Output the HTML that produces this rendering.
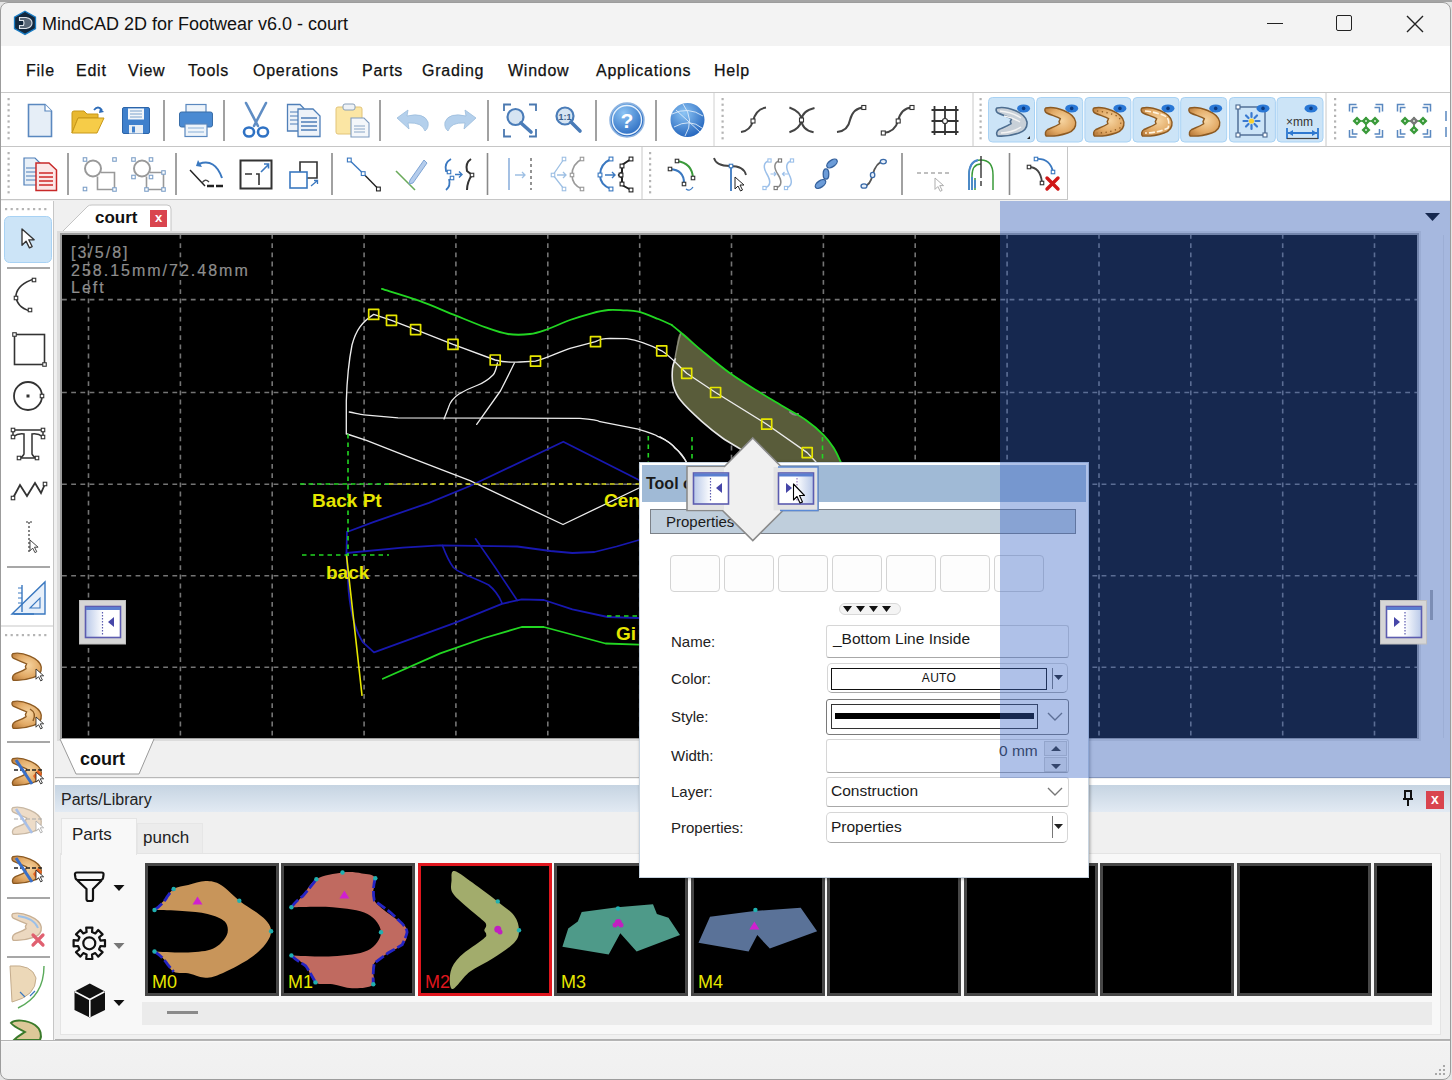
<!DOCTYPE html>
<html><head><meta charset="utf-8">
<style>
*{margin:0;padding:0;box-sizing:border-box}
html,body{width:1452px;height:1080px;overflow:hidden;background:#e4e4e4;font-family:"Liberation Sans",sans-serif;color:#000}
.a{position:absolute}
#menu span{position:absolute;top:62px;font-size:16px;color:#111;letter-spacing:0.75px;-webkit-text-stroke:0.25px #111}
.lbl{position:absolute;font-size:15px;color:#222;left:671px}
.fld{position:absolute;background:#fff;border:1px solid #d6d6d6;border-bottom-color:#a8a8a8;border-radius:3px}
.thumb{position:absolute;top:863px;width:134px;height:133px;background:#000;border:3px solid #474747}
.thumb span{position:absolute;left:4px;top:106px;font-size:18px;color:#e6e600}
.eb{position:absolute;top:555px;width:50px;height:37px;background:#fdfdfd;border:1px solid #d4d4d4;border-radius:4px}
</style></head><body>
<!-- window base -->
<div class="a" style="left:0;top:2px;width:1451px;height:1078px;background:#f0f0f0;border-radius:8px"></div>
<!-- title -->
<div class="a" style="left:0;top:2px;width:1451px;height:44px;background:#f3f3f3;border-radius:8px 8px 0 0"></div>
<svg class="a" style="left:0;top:0" width="50" height="46"><polygon points="25,11.3 35.5,17.2 35.5,28.6 25,34.4 14.5,28.6 14.5,17.2" fill="#13283e" stroke="#1a7cc4" stroke-width="1.3"/><path d="M19.5,17.5 H26 Q32,18.5 32,23 Q32,27.5 26,28.5 H19.5 V25.5 H23.5 Q24.5,23 23.5,20.5 H19.5Z" fill="#5a6878" stroke="#dfe4ea" stroke-width="1.1"/></svg>
<div class="a" style="left:42px;top:14px;font-size:18px;color:#111">MindCAD 2D for Footwear v6.0 - court</div>
<div class="a" style="left:1267px;top:23px;width:16px;height:1px;background:#222"></div>
<div class="a" style="left:1336px;top:15px;width:16px;height:16px;border:1.6px solid #222;border-radius:2px"></div>
<svg class="a" style="left:1406px;top:15px" width="18" height="18"><path d="M1,1 L17,17 M17,1 L1,17" stroke="#222" stroke-width="1.4"/></svg>
<!-- menu -->
<div class="a" style="left:1px;top:46px;width:1449px;height:47px;background:#fff;border-bottom:1px solid #c8c8c8"></div>
<div id="menu">
  <span style="left:26px">File</span>
  <span style="left:76px">Edit</span>
  <span style="left:128px">View</span>
  <span style="left:188px">Tools</span>
  <span style="left:253px">Operations</span>
  <span style="left:362px">Parts</span>
  <span style="left:422px">Grading</span>
  <span style="left:508px">Window</span>
  <span style="left:596px">Applications</span>
  <span style="left:714px">Help</span>
</div>
<!-- toolbar rows -->
<div class="a" style="left:1px;top:93px;width:1449px;height:54px;background:#fff;border-bottom:1px solid #c6c6c6"></div>
<div class="a" style="left:1px;top:147px;width:1449px;height:53px;background:#fff"></div>
<div class="a" style="left:1px;top:199px;width:1067px;height:1px;background:#c6c6c6"></div>
<div class="a" style="left:1067px;top:147px;width:1px;height:53px;background:#c6c6c6"></div>
<div id="icons1"><svg class="a" style="left:0;top:0" width="1452" height="1080"><defs><radialGradient id="shg" cx="0.55" cy="0.45" r="0.7"><stop offset="0" stop-color="#f6d4a0"/><stop offset="0.6" stop-color="#e2aa66"/><stop offset="1" stop-color="#b87a3a"/></radialGradient></defs><rect x="7.5" y="98" width="2.2" height="2.2" fill="#b4b4b4"/><rect x="7.5" y="103.6" width="2.2" height="2.2" fill="#b4b4b4"/><rect x="7.5" y="109.19999999999999" width="2.2" height="2.2" fill="#b4b4b4"/><rect x="7.5" y="114.79999999999998" width="2.2" height="2.2" fill="#b4b4b4"/><rect x="7.5" y="120.39999999999998" width="2.2" height="2.2" fill="#b4b4b4"/><rect x="7.5" y="125.99999999999997" width="2.2" height="2.2" fill="#b4b4b4"/><rect x="7.5" y="131.59999999999997" width="2.2" height="2.2" fill="#b4b4b4"/><rect x="7.5" y="137.19999999999996" width="2.2" height="2.2" fill="#b4b4b4"/><path d="M28.5,104.5 H45 L51.5,111 V136.5 H28.5Z" fill="#e6eef7" stroke="#5a88bf" stroke-width="1.6"/><path d="M45,104.5V111H51.5" fill="#fff" stroke="#5a88bf" stroke-width="1.2"/><path d="M72,133 V113 Q72,111 74,111 H84 L87,114 H98 V118 H78 Z" fill="#e8b830" stroke="#c89818" stroke-width="1"/><path d="M72,133 L78,118 H104 L97,133Z" fill="#f6cc48" stroke="#c89818" stroke-width="1"/><path d="M94,110 Q98,105 102,110" stroke="#2e6cb8" stroke-width="1.8" fill="none"/><path d="M100,108 L104,112 L99,113Z" fill="#2e6cb8"/><rect x="122.5" y="107.5" width="27" height="26" rx="1.5" fill="#3f80cc" stroke="#2c64a8" stroke-width="1"/><rect x="128" y="108.5" width="16" height="11" fill="#f2f6fa"/><path d="M130,111H142M130,114H142M130,117H142" stroke="#7aa2cc" stroke-width="1"/><rect x="129" y="125" width="14" height="8.5" fill="#e8eef4"/><rect x="132" y="126.5" width="3" height="6" fill="#3f80cc"/><path d="M164,100V141" stroke="#8a8a8a" stroke-width="1.6"/><rect x="186" y="104.5" width="20" height="8" fill="#eef4fa" stroke="#5a88bf" stroke-width="1.2"/><rect x="179.5" y="112" width="33" height="15" rx="2" fill="#4a8ad2" stroke="#3a6ea8" stroke-width="1"/><rect x="185" y="124" width="22" height="12.5" fill="#eef4fa" stroke="#5a88bf" stroke-width="1.2"/><path d="M188,128H204M188,132H204" stroke="#8ab0d8" stroke-width="1"/><path d="M224,100V141" stroke="#8a8a8a" stroke-width="1.6"/><path d="M246,103 L258,126 M266,103 L254,126" stroke="#5f8dc4" stroke-width="2.6" stroke-linecap="round"/><ellipse cx="249" cy="132" rx="5" ry="4.5" fill="none" stroke="#2f72c4" stroke-width="2.6"/><ellipse cx="263" cy="132" rx="5" ry="4.5" fill="none" stroke="#2f72c4" stroke-width="2.6"/><path d="M287.5,104.5H300L304,108.5V131H287.5Z" fill="#eef3f9" stroke="#4f7fb8" stroke-width="1.3"/><path d="M290,112H301M290,116H301M290,120H301M290,124H301" stroke="#4f7fb8" stroke-width="1.2"/><path d="M298,109H313L320,116V136.5H298Z" fill="#eef3f9" stroke="#4f7fb8" stroke-width="1.3"/><path d="M301,118H317M301,122H317M301,126H317M301,130H317" stroke="#4f7fb8" stroke-width="1.3"/><rect x="336" y="107" width="26" height="27" rx="2" fill="#fbe6a4" stroke="#e2c478" stroke-width="1"/><rect x="343" y="104" width="12" height="6" rx="2" fill="#eef2f6" stroke="#8aa0b8" stroke-width="1"/><path d="M351,118H364L369,123V137H351Z" fill="#f4f7fa" stroke="#7f9cbf" stroke-width="1.1"/><path d="M354,126H365M354,129H365M354,132H365" stroke="#8aa6c6" stroke-width="1"/><path d="M380,100V141" stroke="#8a8a8a" stroke-width="1.6"/><path d="M397,118 L408,110 L407,116 Q424,112 428,122 Q429,128 425,131 Q422,122 408,123 L409,129Z" fill="#b4d0ec" stroke="#9cbcdc" stroke-width="0.8"/><path d="M476,118 L465,110 L466,116 Q449,112 445,122 Q444,128 448,131 Q451,122 465,123 L464,129Z" fill="#b4d0ec" stroke="#9cbcdc" stroke-width="0.8"/><path d="M488,100V141" stroke="#8a8a8a" stroke-width="1.6"/><path d="M504,111V104.5H511 M529,104.5H536V111 M536,129V136.5H529 M511,136.5H504V129" stroke="#4a78b0" stroke-width="1.8" fill="none"/><circle cx="515.5" cy="117" r="8" fill="#d6e4f2" stroke="#4a7cb8" stroke-width="2.2"/><path d="M521,123L531,132" stroke="#4a7cb8" stroke-width="3.6" stroke-linecap="round"/><circle cx="565" cy="116" r="8.5" fill="#d6e4f2" stroke="#4a7cb8" stroke-width="2.2"/><text x="565" y="119.5" font-size="9" font-weight="bold" text-anchor="middle" fill="#3a5c88" font-family="Liberation Sans">1:1</text><path d="M571,122L580,131" stroke="#4a7cb8" stroke-width="3.6" stroke-linecap="round"/><path d="M596,100V141" stroke="#8a8a8a" stroke-width="1.6"/><defs><radialGradient id="hg" cx="0.4" cy="0.3" r="0.8"><stop offset="0" stop-color="#8cc4f4"/><stop offset="1" stop-color="#1a5cb8"/></radialGradient></defs><circle cx="627" cy="120" r="17" fill="url(#hg)" stroke="#8fb4e0" stroke-width="1.5"/><circle cx="627" cy="120" r="14.5" fill="none" stroke="#e8f2fc" stroke-width="1.3"/><text x="627" y="128" font-size="21" font-weight="bold" text-anchor="middle" fill="#fff" font-family="Liberation Sans">?</text><path d="M656,100V141" stroke="#8a8a8a" stroke-width="1.6"/><circle cx="687.5" cy="120" r="17" fill="url(#hg)"/><path d="M672,114 Q688,106 703,116 M674,127 Q690,118 702,128 M683,104 Q695,120 685,136 M676,110 L700,132" stroke="#e4f0fc" stroke-width="1" fill="none" opacity="0.85"/><path d="M714,93V146" stroke="#d0d0d0" stroke-width="1"/><rect x="721.5" y="98" width="2.2" height="2.2" fill="#b4b4b4"/><rect x="721.5" y="103.6" width="2.2" height="2.2" fill="#b4b4b4"/><rect x="721.5" y="109.19999999999999" width="2.2" height="2.2" fill="#b4b4b4"/><rect x="721.5" y="114.79999999999998" width="2.2" height="2.2" fill="#b4b4b4"/><rect x="721.5" y="120.39999999999998" width="2.2" height="2.2" fill="#b4b4b4"/><rect x="721.5" y="125.99999999999997" width="2.2" height="2.2" fill="#b4b4b4"/><rect x="721.5" y="131.59999999999997" width="2.2" height="2.2" fill="#b4b4b4"/><rect x="721.5" y="137.19999999999996" width="2.2" height="2.2" fill="#b4b4b4"/><path d="M741,132 Q750,131 753,121 Q756,109 766,107.5" stroke="#444" stroke-width="2" fill="none"/><rect x="751.0" y="119.0" width="4" height="4" fill="#fff" stroke="#333" stroke-width="1.1"/><path d="M789.4,107.5 Q801.5,112 801.5,120 Q802,130 813.6,132.3 M814.5,108 Q802,111 801.5,120 Q800,129 789.4,132.3" stroke="#444" stroke-width="2" fill="none"/><rect x="799.5" y="118.0" width="4" height="4" fill="#fff" stroke="#333" stroke-width="1.1"/><path d="M837,132 Q848,131 850,120 Q853,108 863.8,107.5" stroke="#444" stroke-width="2" fill="none"/><rect x="861.8" y="105.5" width="4" height="4" fill="#fff" stroke="#333" stroke-width="1.1"/><path d="M883.3,133 Q895,132 898,121 Q901,108 912,107.5" stroke="#444" stroke-width="2" fill="none"/><rect x="881.3" y="131.0" width="4" height="4" fill="#fff" stroke="#333" stroke-width="1.1"/><rect x="896.2" y="119.0" width="4" height="4" fill="#fff" stroke="#333" stroke-width="1.1"/><rect x="910.0" y="105.5" width="4" height="4" fill="#fff" stroke="#333" stroke-width="1.1"/><path d="M934.5,106V135M945,106V135M956,106V135M931.5,110H958.5M931.5,121H958.5M931.5,132H958.5" stroke="#333" stroke-width="1.8"/><circle cx="945" cy="121" r="2.5" fill="#fff" stroke="#333" stroke-width="1.2"/><path d="M973,93V146" stroke="#c8c8c8" stroke-width="1"/><rect x="979.5" y="98" width="2.2" height="2.2" fill="#b4b4b4"/><rect x="979.5" y="103.6" width="2.2" height="2.2" fill="#b4b4b4"/><rect x="979.5" y="109.19999999999999" width="2.2" height="2.2" fill="#b4b4b4"/><rect x="979.5" y="114.79999999999998" width="2.2" height="2.2" fill="#b4b4b4"/><rect x="979.5" y="120.39999999999998" width="2.2" height="2.2" fill="#b4b4b4"/><rect x="979.5" y="125.99999999999997" width="2.2" height="2.2" fill="#b4b4b4"/><rect x="979.5" y="131.59999999999997" width="2.2" height="2.2" fill="#b4b4b4"/><rect x="979.5" y="137.19999999999996" width="2.2" height="2.2" fill="#b4b4b4"/><rect x="988.5" y="97.5" width="46" height="44.5" rx="4" fill="#cce4f7" stroke="#a8d2f4" stroke-width="1"/><rect x="1036.7" y="97.5" width="46" height="44.5" rx="4" fill="#cce4f7" stroke="#a8d2f4" stroke-width="1"/><rect x="1084.9" y="97.5" width="46" height="44.5" rx="4" fill="#cce4f7" stroke="#a8d2f4" stroke-width="1"/><rect x="1133" y="97.5" width="46" height="44.5" rx="4" fill="#cce4f7" stroke="#a8d2f4" stroke-width="1"/><rect x="1180.7" y="97.5" width="46" height="44.5" rx="4" fill="#cce4f7" stroke="#a8d2f4" stroke-width="1"/><rect x="1229.4" y="97.5" width="46" height="44.5" rx="4" fill="#cce4f7" stroke="#a8d2f4" stroke-width="1"/><rect x="1277" y="97.5" width="46" height="44.5" rx="4" fill="#cce4f7" stroke="#a8d2f4" stroke-width="1"/><g transform="translate(1012,122)"><path d="M-15,-14 C-11,-15 -3,-14 3,-11.5 C9,-9 14,-6 15,0 C15.5,5 13,9 7,11 C1,13 -9,14.5 -14.5,14 C-16,12 -15.5,9 -13,7.5 C-10,6 -5,4.5 -1,1.7 L-1.7,-0.4 L-0.4,-3.3 C-3,-5 -10,-7 -14,-9 C-16,-10 -16.5,-13 -15,-14Z" fill="#c8d0d8" stroke="#4e6e90" stroke-width="1.6"/><path d="M-12,-11 Q0,-10 9,-4 M-11,11 Q2,10 9,5 M-8,-6 Q2,-4 8,0" stroke="#f4f4f4" stroke-width="1.5" fill="none"/></g><ellipse cx="1023.6" cy="108.4" rx="6.5" ry="4" fill="#2a78d6"/><circle cx="1023.6" cy="108.4" r="1.8" fill="#0c3a80"/><path d="M1027,139 L1030,136 L1030,139Z" fill="#222"/><g transform="translate(1060.7,122)"><path d="M-15,-14 C-11,-15 -3,-14 3,-11.5 C9,-9 14,-6 15,0 C15.5,5 13,9 7,11 C1,13 -9,14.5 -14.5,14 C-16,12 -15.5,9 -13,7.5 C-10,6 -5,4.5 -1,1.7 L-1.7,-0.4 L-0.4,-3.3 C-3,-5 -10,-7 -14,-9 C-16,-10 -16.5,-13 -15,-14Z" fill="url(#shg)" stroke="#8c5a22" stroke-width="1.4" opacity="1"/></g><ellipse cx="1071.7" cy="108.4" rx="6.5" ry="4" fill="#2a78d6"/><circle cx="1071.7" cy="108.4" r="1.8" fill="#0c3a80"/><g transform="translate(1108.9,122)"><path d="M-15,-14 C-11,-15 -3,-14 3,-11.5 C9,-9 14,-6 15,0 C15.5,5 13,9 7,11 C1,13 -9,14.5 -14.5,14 C-16,12 -15.5,9 -13,7.5 C-10,6 -5,4.5 -1,1.7 L-1.7,-0.4 L-0.4,-3.3 C-3,-5 -10,-7 -14,-9 C-16,-10 -16.5,-13 -15,-14Z" fill="url(#shg)" stroke="#8c5a22" stroke-width="1.4" opacity="1"/></g><ellipse cx="1119.9" cy="108.4" rx="6.5" ry="4" fill="#2a78d6"/><circle cx="1119.9" cy="108.4" r="1.8" fill="#0c3a80"/><g transform="translate(1157,122)"><path d="M-15,-14 C-11,-15 -3,-14 3,-11.5 C9,-9 14,-6 15,0 C15.5,5 13,9 7,11 C1,13 -9,14.5 -14.5,14 C-16,12 -15.5,9 -13,7.5 C-10,6 -5,4.5 -1,1.7 L-1.7,-0.4 L-0.4,-3.3 C-3,-5 -10,-7 -14,-9 C-16,-10 -16.5,-13 -15,-14Z" fill="url(#shg)" stroke="#8c5a22" stroke-width="1.4" opacity="1"/></g><ellipse cx="1168" cy="108.4" rx="6.5" ry="4" fill="#2a78d6"/><circle cx="1168" cy="108.4" r="1.8" fill="#0c3a80"/><g transform="translate(1204.7,122)"><path d="M-15,-14 C-11,-15 -3,-14 3,-11.5 C9,-9 14,-6 15,0 C15.5,5 13,9 7,11 C1,13 -9,14.5 -14.5,14 C-16,12 -15.5,9 -13,7.5 C-10,6 -5,4.5 -1,1.7 L-1.7,-0.4 L-0.4,-3.3 C-3,-5 -10,-7 -14,-9 C-16,-10 -16.5,-13 -15,-14Z" fill="url(#shg)" stroke="#8c5a22" stroke-width="1.4" opacity="1"/></g><ellipse cx="1215.7" cy="108.4" rx="6.5" ry="4" fill="#2a78d6"/><circle cx="1215.7" cy="108.4" r="1.8" fill="#0c3a80"/><g transform="translate(1108.9,122)"><path d="M-12,-11 Q0,-10 10,-5 Q13,0 11,6 Q0,11 -12,11" stroke="#8c5a22" stroke-width="1.3" stroke-dasharray="1.3 3.5" fill="none"/></g><g transform="translate(1157,122)"><path d="M-12,-11 Q0,-10 10,-5 Q13,0 11,6 Q0,11 -12,11" stroke="#fff4e0" stroke-width="1.6" stroke-dasharray="6 2" fill="none"/></g><rect x="1238" y="107" width="27" height="28" fill="none" stroke="#4a6890" stroke-width="1.4"/><rect x="1236.0" y="105.0" width="4" height="4" fill="#fff" stroke="#4a6890" stroke-width="1.1"/><rect x="1263.0" y="133.0" width="4" height="4" fill="#fff" stroke="#4a6890" stroke-width="1.1"/><rect x="1236.0" y="133.0" width="4" height="4" fill="#fff" stroke="#4a6890" stroke-width="1.1"/><g stroke="#3a7ad0" stroke-width="2.2" stroke-linecap="round"><path d="M1251.5,113V117M1251.5,125V129M1243.5,121H1247.5M1255.5,121H1259.5M1246,115.5L1248.5,118M1254.5,124L1257,126.5M1257,115.5L1254.5,118M1248.5,124L1246,126.5"/></g><circle cx="1251.5" cy="121" r="2.6" fill="#f8d030"/><ellipse cx="1263" cy="108.4" rx="6.5" ry="4" fill="#2a78d6"/><circle cx="1263" cy="108.4" r="1.8" fill="#0c3a80"/><text x="1286" y="126" font-size="12" fill="#333" font-family="Liberation Sans">×mm</text><path d="M1287,128V139M1318,128V139M1288,133H1317" stroke="#2e78d0" stroke-width="1.8"/><path d="M1288,133L1293,130V136Z M1317,133L1312,130V136Z" fill="#2e78d0"/><path d="M1287,138.5H1318" stroke="#444" stroke-width="1.2"/><ellipse cx="1311" cy="108.4" rx="6.5" ry="4" fill="#2a78d6"/><circle cx="1311" cy="108.4" r="1.8" fill="#0c3a80"/><path d="M1326,93V146" stroke="#c8c8c8" stroke-width="1"/><rect x="1334" y="98" width="2.2" height="2.2" fill="#b4b4b4"/><rect x="1334" y="103.6" width="2.2" height="2.2" fill="#b4b4b4"/><rect x="1334" y="109.19999999999999" width="2.2" height="2.2" fill="#b4b4b4"/><rect x="1334" y="114.79999999999998" width="2.2" height="2.2" fill="#b4b4b4"/><rect x="1334" y="120.39999999999998" width="2.2" height="2.2" fill="#b4b4b4"/><rect x="1334" y="125.99999999999997" width="2.2" height="2.2" fill="#b4b4b4"/><rect x="1334" y="131.59999999999997" width="2.2" height="2.2" fill="#b4b4b4"/><rect x="1334" y="137.19999999999996" width="2.2" height="2.2" fill="#b4b4b4"/><path d="M1349.5,111.5V104.5H1356.5 M1352.5,112.5V107.5H1357.5 M1375.5,104.5H1382.5V111.5 M1374.5,107.5H1379.5V112.5 M1349.5,130V137H1356.5 M1352.5,129V134H1357.5 M1375.5,137H1382.5V130 M1374.5,134H1379.5V129" stroke="#5a88c0" stroke-width="1.5" fill="none"/><path d="M1357,121H1375M1366,117V129" stroke="#3a9a3a" stroke-width="1.6"/><path d="M1352.5,121L1357,116.5L1361.5,121L1357,125.5Z" fill="#3a9a3a"/><circle cx="1357" cy="121" r="0.9" fill="#e8f4e8"/><path d="M1370.5,121L1375,116.5L1379.5,121L1375,125.5Z" fill="#3a9a3a"/><circle cx="1375" cy="121" r="0.9" fill="#e8f4e8"/><path d="M1361.5,121L1366,116.5L1370.5,121L1366,125.5Z" fill="#3a9a3a"/><circle cx="1366" cy="121" r="0.9" fill="#e8f4e8"/><path d="M1361.5,130L1366,125.5L1370.5,130L1366,134.5Z" fill="#3a9a3a"/><circle cx="1366" cy="130" r="0.9" fill="#e8f4e8"/><path d="M1397.5,111.5V104.5H1404.5 M1400.5,112.5V107.5H1405.5 M1423.5,104.5H1430.5V111.5 M1422.5,107.5H1427.5V112.5 M1397.5,130V137H1404.5 M1400.5,129V134H1405.5 M1423.5,137H1430.5V130 M1422.5,134H1427.5V129" stroke="#5a88c0" stroke-width="1.5" fill="none"/><path d="M1405,121H1423M1414,117V129" stroke="#3a9a3a" stroke-width="1.6"/><path d="M1400.5,121L1405,116.5L1409.5,121L1405,125.5Z" fill="#3a9a3a"/><circle cx="1405" cy="121" r="0.9" fill="#e8f4e8"/><path d="M1418.5,121L1423,116.5L1427.5,121L1423,125.5Z" fill="#3a9a3a"/><circle cx="1423" cy="121" r="0.9" fill="#e8f4e8"/><path d="M1409.5,121L1414,116.5L1418.5,121L1414,125.5Z" fill="#777"/><circle cx="1414" cy="121" r="0.9" fill="#e8f4e8"/><path d="M1409.5,130L1414,125.5L1418.5,130L1414,134.5Z" fill="#3a9a3a"/><circle cx="1414" cy="130" r="0.9" fill="#e8f4e8"/><path d="M1446,111V121M1446,127V137" stroke="#5a88c0" stroke-width="1.5"/><rect x="7.5" y="152" width="2.2" height="2.2" fill="#b4b4b4"/><rect x="7.5" y="157.6" width="2.2" height="2.2" fill="#b4b4b4"/><rect x="7.5" y="163.2" width="2.2" height="2.2" fill="#b4b4b4"/><rect x="7.5" y="168.79999999999998" width="2.2" height="2.2" fill="#b4b4b4"/><rect x="7.5" y="174.39999999999998" width="2.2" height="2.2" fill="#b4b4b4"/><rect x="7.5" y="179.99999999999997" width="2.2" height="2.2" fill="#b4b4b4"/><rect x="7.5" y="185.59999999999997" width="2.2" height="2.2" fill="#b4b4b4"/><rect x="7.5" y="191.19999999999996" width="2.2" height="2.2" fill="#b4b4b4"/><path d="M24,158H35L40,163V185H24Z" fill="#e8f0f8" stroke="#4f7fb8" stroke-width="1.2"/><path d="M26,168H36M26,172H36M26,176H36M26,180H36" stroke="#4f7fb8" stroke-width="1.2"/><path d="M36,163H49L56.5,170V190.5H36Z" fill="#fbe8e8" stroke="#c82828" stroke-width="1.5"/><path d="M39,173H53M39,177H53M39,181H53M39,185H53" stroke="#d02828" stroke-width="1.5"/><path d="M68,153V195" stroke="#8a8a8a" stroke-width="1.6"/><circle cx="93" cy="168.5" r="8" fill="none" stroke="#999" stroke-width="2"/><path d="M97.5,176.5V189.5H114.5V172.5H101" stroke="#999" stroke-width="1.6" fill="none"/><rect x="83.25" y="157.75" width="3.5" height="3.5" fill="#fff" stroke="#7ea0c8" stroke-width="1.1"/><rect x="112.75" y="157.75" width="3.5" height="3.5" fill="#fff" stroke="#7ea0c8" stroke-width="1.1"/><rect x="83.25" y="187.25" width="3.5" height="3.5" fill="#fff" stroke="#7ea0c8" stroke-width="1.1"/><rect x="112.75" y="187.75" width="3.5" height="3.5" fill="#fff" stroke="#7ea0c8" stroke-width="1.1"/><circle cx="142" cy="168.5" r="8" fill="none" stroke="#999" stroke-width="2"/><path d="M146.5,176.5V189.5H163.5V172.5H150" stroke="#999" stroke-width="1.6" fill="none"/><rect x="131.75" y="157.75" width="3.5" height="3.5" fill="#fff" stroke="#7ea0c8" stroke-width="1.1"/><rect x="149.25" y="157.75" width="3.5" height="3.5" fill="#fff" stroke="#7ea0c8" stroke-width="1.1"/><rect x="131.75" y="175.25" width="3.5" height="3.5" fill="#fff" stroke="#7ea0c8" stroke-width="1.1"/><rect x="149.25" y="175.25" width="3.5" height="3.5" fill="#fff" stroke="#7ea0c8" stroke-width="1.1"/><rect x="144.75" y="187.75" width="3.5" height="3.5" fill="#fff" stroke="#7ea0c8" stroke-width="1.1"/><rect x="161.75" y="187.75" width="3.5" height="3.5" fill="#fff" stroke="#7ea0c8" stroke-width="1.1"/><rect x="161.75" y="170.75" width="3.5" height="3.5" fill="#fff" stroke="#7ea0c8" stroke-width="1.1"/><path d="M176,153V195" stroke="#8a8a8a" stroke-width="1.6"/><path d="M190,170L205,186" stroke="#222" stroke-width="1.4"/><path d="M199,164 Q215,158 222,178" stroke="#3a78c0" stroke-width="2" fill="none"/><path d="M198,160L196,166L202,167Z" fill="#3a78c0"/><path d="M202,183 Q205,178 209,182" stroke="#444" stroke-width="1.3" fill="none"/><path d="M207,186H224" stroke="#222" stroke-width="2.4" stroke-dasharray="7 2"/><rect x="240.5" y="160.5" width="31" height="28" fill="none" stroke="#333" stroke-width="2"/><path d="M245,174H252M256,174H259V185M259,174" stroke="#333" stroke-width="1.6" fill="none"/><path d="M261,172L268,165M264,164H268.5V168.5" stroke="#3a78c0" stroke-width="1.6" fill="none"/><path d="M300,172V162H317V178H307" stroke="#333" stroke-width="1.6" fill="none"/><rect x="290" y="172" width="17" height="16" fill="#fff" stroke="#3a78c0" stroke-width="1.6"/><path d="M311,186L317,181M314,180.5H317.5V184" stroke="#3a78c0" stroke-width="1.3" fill="none"/><path d="M332,153V195" stroke="#8a8a8a" stroke-width="1.6"/><path d="M349.3,160L363.2,173.6" stroke="#3a78c0" stroke-width="1.4"/><path d="M363.2,173.6L378.4,189" stroke="#222" stroke-width="1.4"/><rect x="347.40000000000003" y="158.1" width="3.8" height="3.8" fill="#fff" stroke="#3a78c0" stroke-width="1.1"/><rect x="361.3" y="171.7" width="3.8" height="3.8" fill="#fff" stroke="#3a78c0" stroke-width="1.1"/><rect x="376.5" y="187.1" width="3.8" height="3.8" fill="#fff" stroke="#222" stroke-width="1.1"/><path d="M396,171L415,190" stroke="#6aaa5a" stroke-width="1.6"/><path d="M424,160 L427,163 L413,183 L409,184 L410,180Z" fill="#b4ccec" stroke="#7ea4d4" stroke-width="1"/><path d="M451,159 Q444,163 446,171 L449,172 M449,179 Q451,186 446,190" stroke="#3a78c0" stroke-width="1.8" fill="none"/><rect x="447.25" y="170.25" width="3.5" height="3.5" fill="#fff" stroke="#3a78c0" stroke-width="1.1"/><rect x="450.25" y="176.25" width="3.5" height="3.5" fill="#fff" stroke="#3a78c0" stroke-width="1.1"/><path d="M455,174.5H462M459,171.5L462,174.5L459,177.5" stroke="#3a78c0" stroke-width="1.4" fill="none"/><path d="M471,159 Q465,163 467,171 L472,175 Q467,182 467,190" stroke="#333" stroke-width="2" fill="none"/><rect x="470.25" y="173.25" width="3.5" height="3.5" fill="#fff" stroke="#333" stroke-width="1.1"/><path d="M487.5,153V195" stroke="#8a8a8a" stroke-width="1.6"/><path d="M509,158V190" stroke="#7ea6d8" stroke-width="1.4"/><path d="M531,158V190" stroke="#666" stroke-width="1.4" stroke-dasharray="3 3"/><path d="M515,175H525M522,172L525,175L522,178" stroke="#9ec0e4" stroke-width="1.3" fill="none"/><path d="M564,159 L553,175 L564,189" stroke="#9ec0e4" stroke-width="1.3" fill="none"/><rect x="562.25" y="157.25" width="3.5" height="3.5" fill="#fff" stroke="#9ec0e4" stroke-width="1.1"/><rect x="551.25" y="173.25" width="3.5" height="3.5" fill="#fff" stroke="#9ec0e4" stroke-width="1.1"/><rect x="562.25" y="187.25" width="3.5" height="3.5" fill="#fff" stroke="#9ec0e4" stroke-width="1.1"/><path d="M557,175H566M563,172L566,175L563,178" stroke="#9ec0e4" stroke-width="1.3" fill="none"/><path d="M582,159 Q572,164 572,175 Q572,185 582,189" stroke="#9a9a9a" stroke-width="1.6" fill="none"/><rect x="580.25" y="157.25" width="3.5" height="3.5" fill="#fff" stroke="#999" stroke-width="1.1"/><rect x="570.25" y="173.25" width="3.5" height="3.5" fill="#fff" stroke="#999" stroke-width="1.1"/><rect x="580.25" y="187.25" width="3.5" height="3.5" fill="#fff" stroke="#999" stroke-width="1.1"/><path d="M611,159 Q600,164 600,175 Q600,185 611,189" stroke="#3a78c0" stroke-width="2" fill="none"/><rect x="609.1" y="157.1" width="3.8" height="3.8" fill="#fff" stroke="#3a78c0" stroke-width="1.1"/><rect x="598.1" y="173.1" width="3.8" height="3.8" fill="#fff" stroke="#3a78c0" stroke-width="1.1"/><rect x="609.1" y="187.1" width="3.8" height="3.8" fill="#fff" stroke="#3a78c0" stroke-width="1.1"/><path d="M605,175H615M612,172L615,175L612,178" stroke="#3a78c0" stroke-width="1.4" fill="none"/><path d="M631,159 L622,165 V172 L619,175 L622,178 V185 L631,190" stroke="#222" stroke-width="2" fill="none"/><rect x="629.1" y="157.1" width="3.8" height="3.8" fill="#fff" stroke="#222" stroke-width="1.1"/><rect x="620.1" y="164.1" width="3.8" height="3.8" fill="#fff" stroke="#222" stroke-width="1.1"/><rect x="619.1" y="173.1" width="3.8" height="3.8" fill="#fff" stroke="#222" stroke-width="1.1"/><rect x="620.1" y="182.1" width="3.8" height="3.8" fill="#fff" stroke="#222" stroke-width="1.1"/><rect x="629.1" y="188.1" width="3.8" height="3.8" fill="#fff" stroke="#222" stroke-width="1.1"/><path d="M642,147V199" stroke="#c8c8c8" stroke-width="1"/><rect x="649" y="152" width="2.2" height="2.2" fill="#b4b4b4"/><rect x="649" y="157.6" width="2.2" height="2.2" fill="#b4b4b4"/><rect x="649" y="163.2" width="2.2" height="2.2" fill="#b4b4b4"/><rect x="649" y="168.79999999999998" width="2.2" height="2.2" fill="#b4b4b4"/><rect x="649" y="174.39999999999998" width="2.2" height="2.2" fill="#b4b4b4"/><rect x="649" y="179.99999999999997" width="2.2" height="2.2" fill="#b4b4b4"/><rect x="649" y="185.59999999999997" width="2.2" height="2.2" fill="#b4b4b4"/><rect x="649" y="191.19999999999996" width="2.2" height="2.2" fill="#b4b4b4"/><path d="M677,161 Q692,163 693,178" stroke="#3a9a3a" stroke-width="2" fill="none"/><path d="M670,169 Q684,170 684,183" stroke="#3a78c0" stroke-width="2" fill="none"/><rect x="675.25" y="159.25" width="3.5" height="3.5" fill="#fff" stroke="#333" stroke-width="1.1"/><rect x="691.25" y="176.25" width="3.5" height="3.5" fill="#fff" stroke="#333" stroke-width="1.1"/><rect x="668.25" y="167.25" width="3.5" height="3.5" fill="#fff" stroke="#333" stroke-width="1.1"/><rect x="682.25" y="182.25" width="3.5" height="3.5" fill="#fff" stroke="#333" stroke-width="1.1"/><path d="M686,189 Q690,192 693,187" stroke="#3a78c0" stroke-width="1.2" fill="none"/><path d="M714,158 Q716,166 730,166 Q744,166 746,175" stroke="#444" stroke-width="1.8" fill="none"/><path d="M731,166V191" stroke="#3a78c0" stroke-width="1.8"/><rect x="729.25" y="164.25" width="3.5" height="3.5" fill="#fff" stroke="#3a78c0" stroke-width="1.1"/><path transform="translate(735,177) scale(1)" d="M0,0 L0,12 L3,9 L5.5,14 L7.5,13 L5,8 L9,8Z" fill="#fff" stroke="#222" stroke-width="1" stroke-linejoin="round"/><path d="M769.5,160.5 C762.5,162.5 763.5,168.25 767.0,174.25 C770.5,180.25 771.5,186 764.5,188" stroke="#9cc0ea" stroke-width="1.5" fill="none"/><rect x="767.9" y="158.9" width="3.2" height="3.2" fill="#fff" stroke="#9cc0ea" stroke-width="1.1"/><rect x="762.9" y="186.4" width="3.2" height="3.2" fill="#fff" stroke="#9cc0ea" stroke-width="1.1"/><path d="M780,160.5 C773,162.5 774,168.25 777.85,174.25 C781.7,180.25 782.7,186 775.7,188" stroke="#8a8a8a" stroke-width="1.5" fill="none"/><rect x="778.4" y="158.9" width="3.2" height="3.2" fill="#fff" stroke="#777" stroke-width="1.1"/><rect x="774.1" y="186.4" width="3.2" height="3.2" fill="#fff" stroke="#777" stroke-width="1.1"/><path d="M792,160.5 C785,162.5 786,168.25 789.0,174.25 C792,180.25 793,186 786,188" stroke="#9cc0ea" stroke-width="1.5" fill="none"/><rect x="790.4" y="158.9" width="3.2" height="3.2" fill="#fff" stroke="#9cc0ea" stroke-width="1.1"/><rect x="784.4" y="186.4" width="3.2" height="3.2" fill="#fff" stroke="#9cc0ea" stroke-width="1.1"/><path d="M770.5,174H776M774,172L776,174L774,176 M788,174H782.5M784.5,172L782.5,174L784.5,176" stroke="#9cc0ea" stroke-width="1.2" fill="none"/><g fill="#6c9cd8" stroke="#34609c" stroke-width="1.3"><ellipse cx="832" cy="163.5" rx="6" ry="3.2" transform="rotate(-35 832 163.5)"/><ellipse cx="826" cy="174" rx="2.8" ry="5.2"/><ellipse cx="820.5" cy="184" rx="6" ry="3.2" transform="rotate(-35 820.5 184)"/></g><path d="M864,186 Q870,186 872.6,175 Q876,162 883.3,161.6" stroke="#555" stroke-width="1.8" fill="none"/><g fill="#e8f0fa" stroke="#3a6aa8" stroke-width="1.3"><ellipse cx="883.3" cy="161.6" rx="3" ry="2.2"/><ellipse cx="872.6" cy="175" rx="2.2" ry="2.6"/><ellipse cx="864" cy="186" rx="3" ry="2.2"/></g><path d="M902,153V195" stroke="#8a8a8a" stroke-width="1.6"/><path d="M917,173H950" stroke="#aaa" stroke-width="1.5" stroke-dasharray="4 3"/><path transform="translate(935,178) scale(0.95)" d="M0,0 L0,12 L3,9 L5.5,14 L7.5,13 L5,8 L9,8Z" fill="#fff" stroke="#aaa" stroke-width="1" stroke-linejoin="round"/><path d="M969,190V175 Q969,160 981,160 Q993,160 993,175V190 M972,190V176 Q972,164 981,164 M975,190V178" stroke="#3a9a3a" stroke-width="1.5" fill="none"/><path d="M969,190V175 Q969,162 978,160 M972,190V177 M975,188V180" stroke="#4a86d0" stroke-width="1.8" fill="none"/><path d="M981,156V178 M981,181V186" stroke="#333" stroke-width="1.4"/><path d="M1009.5,153V195" stroke="#8a8a8a" stroke-width="1.6"/><path d="M1029,167 Q1040,167 1042,182" stroke="#444" stroke-width="1.8" fill="none"/><path d="M1036,159 Q1050,158 1053,172" stroke="#3a78c0" stroke-width="1.8" fill="none"/><rect x="1027.25" y="165.25" width="3.5" height="3.5" fill="#fff" stroke="#333" stroke-width="1.1"/><rect x="1040.25" y="181.25" width="3.5" height="3.5" fill="#fff" stroke="#333" stroke-width="1.1"/><rect x="1034.25" y="157.25" width="3.5" height="3.5" fill="#fff" stroke="#3a78c0" stroke-width="1.1"/><rect x="1051.25" y="170.25" width="3.5" height="3.5" fill="#fff" stroke="#3a78c0" stroke-width="1.1"/><path d="M1047,178L1058,189M1058,178L1047,189" stroke="#d01818" stroke-width="3.4" stroke-linecap="round"/></svg></div><!--e1-->
<!-- left toolbar -->
<div class="a" style="left:1px;top:201px;width:53px;height:839px;background:#fff;border-right:1px solid #c6c6c6"></div>
<div id="icons2"><svg class="a" style="left:0;top:0" width="1452" height="1080"><defs><radialGradient id="shg2" cx="0.55" cy="0.45" r="0.7"><stop offset="0" stop-color="#f6d4a0"/><stop offset="0.6" stop-color="#e2aa66"/><stop offset="1" stop-color="#b87a3a"/></radialGradient></defs><rect x="5" y="208" width="2.2" height="2.2" fill="#b4b4b4"/><rect x="10.6" y="208" width="2.2" height="2.2" fill="#b4b4b4"/><rect x="16.2" y="208" width="2.2" height="2.2" fill="#b4b4b4"/><rect x="21.799999999999997" y="208" width="2.2" height="2.2" fill="#b4b4b4"/><rect x="27.4" y="208" width="2.2" height="2.2" fill="#b4b4b4"/><rect x="33.0" y="208" width="2.2" height="2.2" fill="#b4b4b4"/><rect x="38.6" y="208" width="2.2" height="2.2" fill="#b4b4b4"/><rect x="44.2" y="208" width="2.2" height="2.2" fill="#b4b4b4"/><rect x="4.5" y="216.5" width="47" height="46" rx="5" fill="#cce4f7" stroke="#a8d2f4" stroke-width="1"/><path transform="translate(22,229) scale(1.35)" d="M0,0 L0,12 L3,9 L5.5,14 L7.5,13 L5,8 L9,8Z" fill="#fff" stroke="#333" stroke-width="1" stroke-linejoin="round"/><path d="M7,268H50" stroke="#8a8a8a" stroke-width="1.6"/><path d="M34,279 Q18,284 16,295 Q16,307 30,311" stroke="#333" stroke-width="1.6" fill="none"/><rect x="32.25" y="278.25" width="3.5" height="3.5" fill="#fff" stroke="#333" stroke-width="1.1"/><rect x="14.25" y="296.25" width="3.5" height="3.5" fill="#fff" stroke="#333" stroke-width="1.1"/><rect x="28.25" y="308.25" width="3.5" height="3.5" fill="#fff" stroke="#333" stroke-width="1.1"/><rect x="14.5" y="334.5" width="30" height="30" fill="none" stroke="#333" stroke-width="1.6"/><rect x="12.75" y="332.75" width="3.5" height="3.5" fill="#fff" stroke="#333" stroke-width="1.1"/><rect x="42.75" y="362.75" width="3.5" height="3.5" fill="#fff" stroke="#333" stroke-width="1.1"/><circle cx="28" cy="396" r="14" fill="none" stroke="#333" stroke-width="1.8"/><rect x="26.5" y="394.5" width="3" height="3" fill="#333"/><rect x="40.25" y="394.25" width="3.5" height="3.5" fill="#fff" stroke="#333" stroke-width="1.1"/><path d="M13,430 H43 V437 Q38,433 32,434 V454 Q33,457 37,458 H19 Q23,457 24,454 V434 Q18,433 13,437Z" fill="#fff" stroke="#333" stroke-width="1.5"/><rect x="11.25" y="428.25" width="3.5" height="3.5" fill="#fff" stroke="#333" stroke-width="1.1"/><rect x="41.25" y="428.25" width="3.5" height="3.5" fill="#fff" stroke="#333" stroke-width="1.1"/><rect x="11.25" y="435.25" width="3.5" height="3.5" fill="#fff" stroke="#333" stroke-width="1.1"/><rect x="41.25" y="435.25" width="3.5" height="3.5" fill="#fff" stroke="#333" stroke-width="1.1"/><rect x="17.25" y="456.25" width="3.5" height="3.5" fill="#fff" stroke="#333" stroke-width="1.1"/><rect x="35.25" y="456.25" width="3.5" height="3.5" fill="#fff" stroke="#333" stroke-width="1.1"/><path d="M13,498 L20,485 L27,496 L35,483 L41,493 L45,484" stroke="#333" stroke-width="1.8" fill="none"/><rect x="11.25" y="496.25" width="3.5" height="3.5" fill="#fff" stroke="#333" stroke-width="1.1"/><rect x="43.25" y="482.25" width="3.5" height="3.5" fill="#fff" stroke="#333" stroke-width="1.1"/><path d="M26,522H32M29,522V554" stroke="#333" stroke-width="1.2" stroke-dasharray="2 2"/><path transform="translate(30,540) scale(0.9)" d="M0,0 L0,12 L3,9 L5.5,14 L7.5,13 L5,8 L9,8Z" fill="#fff" stroke="#333" stroke-width="1" stroke-linejoin="round"/><path d="M7,567H50" stroke="#8a8a8a" stroke-width="1.6"/><path d="M12,614 L45,582 V614Z" fill="#e8f0fa" stroke="#3a78c0" stroke-width="1.4"/><path d="M22,585V612M14,614H34" stroke="#3a78c0" stroke-width="1.4"/><path d="M30,608 L40,598 V608Z" fill="none" stroke="#3a78c0" stroke-width="1.1"/><path d="M18,588H22M18,593H22M18,598H22M18,603H22" stroke="#3a78c0" stroke-width="1"/><path d="M1,626H54" stroke="#c8c8c8" stroke-width="1.2"/><rect x="5" y="634" width="2.2" height="2.2" fill="#b4b4b4"/><rect x="10.6" y="634" width="2.2" height="2.2" fill="#b4b4b4"/><rect x="16.2" y="634" width="2.2" height="2.2" fill="#b4b4b4"/><rect x="21.799999999999997" y="634" width="2.2" height="2.2" fill="#b4b4b4"/><rect x="27.4" y="634" width="2.2" height="2.2" fill="#b4b4b4"/><rect x="33.0" y="634" width="2.2" height="2.2" fill="#b4b4b4"/><rect x="38.6" y="634" width="2.2" height="2.2" fill="#b4b4b4"/><rect x="44.2" y="634" width="2.2" height="2.2" fill="#b4b4b4"/><g transform="translate(27,667)"><g transform="scale(0.95)"><path d="M-15,-14 C-11,-15 -3,-14 3,-11.5 C9,-9 14,-6 15,0 C15.5,5 13,9 7,11 C1,13 -9,14.5 -14.5,14 C-16,12 -15.5,9 -13,7.5 C-10,6 -5,4.5 -1,1.7 L-1.7,-0.4 L-0.4,-3.3 C-3,-5 -10,-7 -14,-9 C-16,-10 -16.5,-13 -15,-14Z" fill="url(#shg2)" stroke="#8c5a22" stroke-width="1.4" opacity="1"/></g></g><path transform="translate(36,669) scale(0.85)" d="M0,0 L0,12 L3,9 L5.5,14 L7.5,13 L5,8 L9,8Z" fill="#fff" stroke="#222" stroke-width="1" stroke-linejoin="round"/><g transform="translate(27,715)"><g transform="scale(0.95)"><path d="M-15,-14 C-11,-15 -3,-14 3,-11.5 C9,-9 14,-6 15,0 C15.5,5 13,9 7,11 C1,13 -9,14.5 -14.5,14 C-16,12 -15.5,9 -13,7.5 C-10,6 -5,4.5 -1,1.7 L-1.7,-0.4 L-0.4,-3.3 C-3,-5 -10,-7 -14,-9 C-16,-10 -16.5,-13 -15,-14Z" fill="url(#shg2)" stroke="#8c5a22" stroke-width="1.4" opacity="1"/></g><path d="M3,-6 Q10,-2 6,6" stroke="#8c5a22" stroke-width="1.4" fill="none"/></g><path transform="translate(36,717) scale(0.85)" d="M0,0 L0,12 L3,9 L5.5,14 L7.5,13 L5,8 L9,8Z" fill="#fff" stroke="#222" stroke-width="1" stroke-linejoin="round"/><path d="M7,742H50" stroke="#8a8a8a" stroke-width="1.6"/><g transform="translate(27,772)"><g transform="scale(0.95)"><path d="M-15,-14 C-11,-15 -3,-14 3,-11.5 C9,-9 14,-6 15,0 C15.5,5 13,9 7,11 C1,13 -9,14.5 -14.5,14 C-16,12 -15.5,9 -13,7.5 C-10,6 -5,4.5 -1,1.7 L-1.7,-0.4 L-0.4,-3.3 C-3,-5 -10,-7 -14,-9 C-16,-10 -16.5,-13 -15,-14Z" fill="url(#shg2)" stroke="#8c5a22" stroke-width="1.4" opacity="1"/></g></g><path d="M14,770H44" stroke="#222" stroke-width="1.3" stroke-dasharray="4 2"/><path d="M16,760 L32,784" stroke="#3a70c8" stroke-width="3"/><path d="M33,776 L38,770 L42,774 L37,782Z" fill="#e86020"/><path transform="translate(36,772) scale(0.85)" d="M0,0 L0,12 L3,9 L5.5,14 L7.5,13 L5,8 L9,8Z" fill="#fff" stroke="#222" stroke-width="1" stroke-linejoin="round"/><g transform="translate(27,821)"><g transform="scale(0.95)"><path d="M-15,-14 C-11,-15 -3,-14 3,-11.5 C9,-9 14,-6 15,0 C15.5,5 13,9 7,11 C1,13 -9,14.5 -14.5,14 C-16,12 -15.5,9 -13,7.5 C-10,6 -5,4.5 -1,1.7 L-1.7,-0.4 L-0.4,-3.3 C-3,-5 -10,-7 -14,-9 C-16,-10 -16.5,-13 -15,-14Z" fill="#eddcc8" stroke="#c8b8a4" stroke-width="1.4" opacity="1"/></g></g><path d="M14,819H44" stroke="#aaa" stroke-width="1.1" stroke-dasharray="4 2"/><path d="M16,809 L32,833" stroke="#a8c0e8" stroke-width="2.5"/><path transform="translate(36,821) scale(0.85)" d="M0,0 L0,12 L3,9 L5.5,14 L7.5,13 L5,8 L9,8Z" fill="#fff" stroke="#aaa" stroke-width="1" stroke-linejoin="round"/><g transform="translate(27,870)"><g transform="scale(0.95)"><path d="M-15,-14 C-11,-15 -3,-14 3,-11.5 C9,-9 14,-6 15,0 C15.5,5 13,9 7,11 C1,13 -9,14.5 -14.5,14 C-16,12 -15.5,9 -13,7.5 C-10,6 -5,4.5 -1,1.7 L-1.7,-0.4 L-0.4,-3.3 C-3,-5 -10,-7 -14,-9 C-16,-10 -16.5,-13 -15,-14Z" fill="url(#shg2)" stroke="#8c5a22" stroke-width="1.4" opacity="1"/></g></g><path d="M14,868H44" stroke="#222" stroke-width="1.3" stroke-dasharray="4 2"/><path d="M16,858 L32,882" stroke="#3a70c8" stroke-width="3"/><path d="M33,874 L38,868 L42,872 L37,880Z" fill="#e86020"/><path transform="translate(36,870) scale(0.85)" d="M0,0 L0,12 L3,9 L5.5,14 L7.5,13 L5,8 L9,8Z" fill="#fff" stroke="#222" stroke-width="1" stroke-linejoin="round"/><path d="M7,898H50" stroke="#8a8a8a" stroke-width="1.6"/><g transform="translate(27,927)"><g transform="scale(0.95)"><path d="M-15,-14 C-11,-15 -3,-14 3,-11.5 C9,-9 14,-6 15,0 C15.5,5 13,9 7,11 C1,13 -9,14.5 -14.5,14 C-16,12 -15.5,9 -13,7.5 C-10,6 -5,4.5 -1,1.7 L-1.7,-0.4 L-0.4,-3.3 C-3,-5 -10,-7 -14,-9 C-16,-10 -16.5,-13 -15,-14Z" fill="#ecd8c0" stroke="#c8b094" stroke-width="1.4" opacity="1"/></g></g><path d="M18,916 Q34,918 38,928" stroke="#9cc0e8" stroke-width="2" fill="none"/><path d="M33,935L43,945M43,935L33,945" stroke="#e06070" stroke-width="3.2" stroke-linecap="round"/><path d="M7,957H50" stroke="#8a8a8a" stroke-width="1.6"/><path d="M10,966 Q32,964 36,978 Q36,996 12,1002Z" fill="#ecd8b8" stroke="#c4ac8c" stroke-width="1"/><path d="M44,966 Q44,996 18,1008" stroke="#5aaa5a" stroke-width="1.4" fill="none"/><path d="M20,992L25,997M30,996L35,991" stroke="#3a78c0" stroke-width="1.2"/><path d="M11,1023 C15,1019 27,1020 35,1025 C41,1029 42,1036 40,1040 L14,1040 C18,1036 22,1034 25,1032 C22,1030 15,1028 11,1023Z" fill="#dcc898" stroke="#3a7a2a" stroke-width="2"/></svg></div><!--e2-->
<!-- doc area -->
<div class="a" style="left:55px;top:201px;width:1395px;height:577px;background:#f0f0f0;border-bottom:1px solid #b8b8b8"></div>
<svg class="a" style="left:55px;top:201px" width="200" height="34"><path d="M6,32 L33,5 Q34,4 37,4 L112,4 Q116,4 116,8 L116,32" fill="#fff" stroke="#c4c4c4" stroke-width="1"/></svg>
<div class="a" style="left:95px;top:208px;font-size:17px;font-weight:bold;color:#111">court</div>
<div class="a" style="left:150px;top:210px;width:17px;height:17px;background:#d9454f;color:#fff;font-size:13px;font-weight:bold;text-align:center;line-height:16px">x</div>
<svg class="a" style="left:1425px;top:213px" width="16" height="9"><path d="M0,0H15L7.5,8Z" fill="#000"/></svg>
<div class="a" style="left:1418px;top:235px;width:26px;height:503px;background:#f0f0f0;border-right:1px solid #e0e0e0"></div>
<div class="a" style="left:1430px;top:590px;width:3px;height:30px;background:#a8a8a8"></div>
<!-- canvas frame -->
<div class="a" style="left:57px;top:231px;width:1364px;height:510px;background:#dcdcdc"></div>
<div class="a" style="left:60px;top:233px;width:1359px;height:506px;background:#9c9c9c"></div>
<!-- canvas -->
<svg class="a" style="left:0;top:0" width="1452" height="1080" viewBox="0 0 1452 1080">
  <defs><clipPath id="cc"><rect x="62" y="235" width="1355" height="503"/></clipPath></defs>
  <rect x="62" y="235" width="1355" height="503" fill="#000"/>
  <g clip-path="url(#cc)">
    <g stroke="#747474" stroke-width="1.6" stroke-dasharray="4.8 4.4" fill="none"><path d="M88.5,234V738M180.4,234V738M272.2,234V738M364.1,234V738M455.9,234V738M547.8,234V738M639.7,234V738M731.5,234V738M823.4,234V738M915.2,234V738M1007.1,234V738M1099.0,234V738M1190.8,234V738M1282.7,234V738M1374.5,234V738"/><path d="M62,299.6H1417M62,392.5H1417M62,484.2H1417M62,575.8H1417M62,667.3H1417"/></g>
    <g id="drawing" fill="none" stroke-linejoin="round" stroke-linecap="round">
      <path d="M680.8,333.0 C676.4,334.4 676.7,353.0 675.3,358.9 C673.9,364.8 672.9,364.2 672.5,368.6 C672.1,373.0 671.8,380.0 673.2,385.3 C674.6,390.6 676.0,394.6 680.8,400.6 C685.5,406.6 694.8,415.2 701.7,421.4 C708.7,427.6 716.0,433.4 722.5,438.0 C729.0,442.6 734.4,445.2 740.6,449.2 C746.9,453.2 753.4,457.7 760.0,462.0 C766.6,466.3 765.7,472.8 780.0,475.0 C794.3,477.2 835.9,477.2 846.0,475.0 C856.1,472.8 842.7,466.2 840.6,461.7 C838.5,457.2 836.4,452.2 833.6,447.8 C830.8,443.4 828.5,439.9 823.9,435.3 C819.3,430.7 812.3,424.6 805.8,420.0 C799.3,415.4 793.1,412.4 785.0,407.5 C776.9,402.6 766.5,396.6 757.2,390.8 C747.9,385.0 738.6,379.5 729.4,372.8 C720.1,366.1 709.8,357.2 701.7,350.6 C693.6,344.0 685.2,331.6 680.8,333.0Z" fill="#595c3a" stroke="none"/>
      <path d="M680.8,333 C678,342 676,352 674.5,362" stroke="#8a8a7a" stroke-width="1.5"/>
      <path d="M675.3,358.9 C674.8,360.5 672.9,364.2 672.5,368.6 C672.1,373.0 671.8,380.0 673.2,385.3 C674.6,390.6 676.0,394.6 680.8,400.6 C685.5,406.6 694.8,415.2 701.7,421.4 C708.7,427.6 716.0,433.4 722.5,438.0 C729.0,442.6 734.4,445.2 740.6,449.2 C746.9,453.2 753.4,457.7 760.0,462.0 C766.6,466.3 776.7,472.8 780.0,475.0" stroke="#e8e8e8" stroke-width="1.6"/>
      <path d="M790,412 Q794,416 798,414" stroke="#8a8a8a" stroke-width="2"/>
      <path d="M381.9,288.9 C388.1,290.9 406.6,296.2 418.9,300.7 C431.2,305.1 444.8,311.2 455.9,315.6 C467.0,320.1 476.9,324.3 485.6,327.4 C494.3,330.5 500.6,332.9 508.0,334.0 C515.4,335.1 523.3,334.8 530.0,334.0 C536.7,333.2 541.3,331.3 548.0,329.0 C554.7,326.7 562.7,322.6 570.0,320.0 C577.3,317.4 585.3,315.0 591.7,313.3 C598.1,311.6 603.0,310.5 608.3,310.0 C613.6,309.5 618.3,310.0 623.3,310.3 C628.3,310.6 632.5,310.2 638.3,311.7 C644.1,313.1 652.7,316.8 658.3,319.0 C663.9,321.2 669.5,324.0 671.7,325.0" stroke="#22d622" stroke-width="1.8"/><path d="M671.7,325.0 C673.2,326.2 675.8,328.2 680.8,332.5 C685.8,336.8 693.6,343.9 701.7,350.6 C709.8,357.3 720.1,366.1 729.4,372.8 C738.6,379.5 747.9,385.0 757.2,390.8 C766.5,396.6 776.9,402.6 785.0,407.5 C793.1,412.4 799.3,415.4 805.8,420.0 C812.3,424.6 819.3,430.7 823.9,435.3 C828.5,439.9 830.8,443.4 833.6,447.8 C836.4,452.2 838.5,457.2 840.6,461.7 C842.7,466.2 845.1,472.8 846.0,475.0" stroke="#22d622" stroke-width="1.8"/>
      <path d="M346.3,434 L346.3,401 C347,380 349,360 352,345 C356,330 362,322 373.7,314.4 L391.5,320.3 L415.6,329.6 L453,344.4 L495.2,360 C503,362 512,362.5 520,362 L535.5,361.2 C545,359 557,353 570,348.3 L595.5,341.7 C600,339 603,338.3 610,338.3 L626.7,338.7 C636,340 650,345 661.7,350.8 C670,356 678,365 686.7,373.3 L715.6,392.5 L766.7,424.2 L807.2,452.6 L816,462" stroke="#ececec" stroke-width="1.35"/>
      <path d="M349.3,412 C355,413 360,414.5 364,414.8 L398,417.8 L580,418.3 C590,419 598,420 600,421.7 L638.3,429.2 C648,432 655,434 658.3,436.7 C666,440 672,444 675,448.3 C680,452 684,456 686,462" stroke="#ececec" stroke-width="1.35"/>
      <path d="M497.4,363 C496,370 494,374 493,375 C488,380 483,383 478,385 C470,388 464,391 459,394 C453,398 450,402 448.5,407.4 L444,419" stroke="#ececec" stroke-width="1.3"/>
      <path d="M514.4,363 C510,372 505,382 500.4,391 L476.7,424.4" stroke="#ececec" stroke-width="1.3"/>
      <path d="M660,436.7 C668,441 674,446 678,450.6 L686.4,461.7" stroke="#ececec" stroke-width="1.3"/>
      <path d="M347,434 L366.4,440.3 L412.2,458.3 L470,480.6 L563,524.5 L639,488" stroke="#ececec" stroke-width="1.35"/>
      <path d="M347,532 L373.3,522.2 L429,502.8 L470,486 L563.3,441.7 L639,480" stroke="#1818b0" stroke-width="1.8"/>
      <path d="M347,532 L346.5,553 L402.7,547.6 L440.2,545.4 L517.3,546.5 L550.4,551 L572.4,553 L594.5,552 L616.5,546.5 L639,540" stroke="#1818b0" stroke-width="1.8"/>
      <path d="M442.4,545.4 C446,555 450,563 453.4,567.5 C458,572 462,573 466.6,575.2 C476,579 483,582 488.7,585 C495,590 499,596 501.9,602.7" stroke="#1818b0" stroke-width="1.6"/>
      <path d="M475.5,538.8 L495.3,567.5 L517.3,600.5" stroke="#1818b0" stroke-width="1.6"/>
      <path d="M346.5,553 L348.7,591.7 C350,605 352,615 354.2,622.6 C357,632 360,638 363,642.4 L374,652.3 L455.6,622.6 L501.9,603.8 L521.7,599.4 L543.8,600 L572.4,609.3 L607.7,617 L639,618" stroke="#1818b0" stroke-width="1.8"/>
      <path d="M382.9,678.8 L440.2,653.4 L484.3,638 L521.7,627 L543.8,627 L605.5,643.5 L639,644.6" stroke="#22d622" stroke-width="1.8"/>
      <path d="M346.5,555.3 L362,695.3" stroke="#e6e600" stroke-width="1.6"/>
      <g stroke-dasharray="4.5 4" stroke-width="1.6" stroke-linecap="butt">
        <path d="M300,484 H389" stroke="#22d622"/>
        <path d="M389,484 H640" stroke="#dcdc20"/>
        <path d="M348,434 V556" stroke="#22d622"/>
        <path d="M302,555 H389" stroke="#22d622"/>
        <path d="M607,616 H640" stroke="#22d622"/>
        <path d="M648.3,436 V462 M692,437 V462 M822.5,437 V462" stroke="#22d622"/>
      </g>
      <g stroke="#e6e600" stroke-width="1.7" fill="none">
        <rect x="368.7" y="309.4" width="10" height="10"/>
        <rect x="386.5" y="315.3" width="10" height="10"/>
        <rect x="410.6" y="324.6" width="10" height="10"/>
        <rect x="448" y="339.4" width="10" height="10"/>
        <rect x="490.2" y="355" width="10" height="10"/>
        <rect x="530.5" y="356.2" width="10" height="10"/>
        <rect x="590.5" y="336.7" width="10" height="10"/>
        <rect x="656.7" y="345.8" width="10" height="10"/>
        <rect x="681.7" y="368.3" width="10" height="10"/>
        <rect x="710.6" y="387.5" width="10" height="10"/>
        <rect x="761.7" y="419.2" width="10" height="10"/>
        <rect x="802.2" y="447.6" width="10" height="10"/>
      </g>
      <g fill="#e6e600" stroke="none" font-family="Liberation Sans" font-weight="bold" font-size="19">
        <text x="312" y="507">Back Pt</text>
        <text x="326" y="578.5">back</text>
        <text x="604" y="507">Cen</text>
        <text x="616" y="640">Gi</text>
      </g>
    </g>
  </g>
</svg>
<div class="a" style="left:71px;top:244px;font-size:16px;line-height:17.6px;color:#8e8e8e;letter-spacing:2px;-webkit-text-stroke:0.2px #8e8e8e">[3/5/8]<br>258.15mm/72.48mm<br>Left</div>
<!-- bottom doc tab -->
<svg class="a" style="left:55px;top:738px" width="120" height="40"><path d="M5,1 L21,36 L84,36 L99,1" fill="#fff" stroke="#9a9a9a" stroke-width="1"/></svg>
<div class="a" style="left:80px;top:749px;font-size:18px;font-weight:bold;color:#111">court</div>

<!-- parts library -->
<div class="a" style="left:55px;top:779px;width:1395px;height:6px;background:#fff"></div>
<div class="a" style="left:55px;top:785px;width:1395px;height:27px;background:linear-gradient(#c6d4e2,#e2eaf3)"></div>
<div class="a" style="left:61px;top:791px;font-size:16px;color:#222">Parts/Library</div>
<div class="a" style="left:55px;top:812px;width:1395px;height:228px;background:#f0f0f0;border-bottom:1px solid #b0b0b0"></div>
<div class="a" style="left:60px;top:853px;width:1381px;height:182px;background:#f8f8f8;border:1px solid #e4e4e4"></div>
<div class="a" style="left:61px;top:818px;width:76px;height:37px;background:#f8f8f8;border:1px solid #e4e4e4;border-bottom:none"></div>
<div class="a" style="left:72px;top:825px;font-size:17px;color:#222">Parts</div>
<div class="a" style="left:137px;top:823px;width:66px;height:30px;background:#ececec;border:1px solid #e6e6e6;border-bottom:none"></div>
<div class="a" style="left:143px;top:828px;font-size:17px;color:#222">punch</div>
<div class="a" style="left:142px;top:1002px;width:1290px;height:23px;background:#ebebeb"></div>
<div class="a" style="left:167px;top:1011px;width:31px;height:3px;background:#8a8a8a"></div>
<svg class="a" style="left:1400px;top:789px" width="16" height="18"><path d="M4,2 H12 M5,2 V10 M11,2 V10 M3,10 H13 M8,10 V17" stroke="#111" stroke-width="2" fill="none"/></svg>
<div class="a" style="left:1426px;top:791px;width:18px;height:18px;background:#d9454f;color:#fff;font-size:14px;font-weight:bold;text-align:center;line-height:17px">x</div>
<div id="icons3"><svg class="a" style="left:0;top:0" width="1452" height="1080"><path d="M77,872.5 H101.5 Q104,872.5 103.5,875 L103,878 Q102.5,880 100.5,880 H78 Q76,880 75.5,878 L75,875 Q74.5,872.5 77,872.5Z M77.5,880.5 L86.5,889 V899 Q86.5,901 88.5,901 H91 Q93,901 93,899 V889 L101.5,880.5" fill="none" stroke="#111" stroke-width="2.2" stroke-linejoin="round"/><path d="M113.5,885 H124.5 L119,891Z" fill="#111"/><path d="M105.0,940.2 L105.0,946.4 L100.5,946.0 L99.1,949.3 L102.6,952.2 L98.2,956.6 L95.3,953.1 L92.0,954.5 L92.4,959.0 L86.2,959.0 L86.6,954.5 L83.3,953.1 L80.4,956.6 L76.0,952.2 L79.5,949.3 L78.1,946.0 L73.6,946.4 L73.6,940.2 L78.1,940.6 L79.5,937.3 L76.0,934.4 L80.4,930.0 L83.3,933.5 L86.6,932.1 L86.2,927.6 L92.4,927.6 L92.0,932.1 L95.3,933.5 L98.2,930.0 L102.6,934.4 L99.1,937.3 L100.5,940.6Z" fill="none" stroke="#111" stroke-width="2.2" stroke-linejoin="round"/><circle cx="89.3" cy="943.3" r="6" fill="none" stroke="#111" stroke-width="2.2"/><path d="M113.5,943 H124.5 L119,949Z" fill="#777"/><path d="M89.8,983.5 L105,991.5 V1010 L89.8,1017.5 L74.5,1010 V991.5Z" fill="#111"/><path d="M75,991.8 L89.8,999.5 L104.5,991.8 M89.8,999.5 V1017" stroke="#fafafa" stroke-width="1.6" fill="none"/><path d="M113.5,1000 H124.5 L119,1006Z" fill="#111"/></svg></div><!--e3-->
<!-- thumbnails -->
<div class="thumb" style="left:145px"><span>M0</span></div>
<div class="thumb" style="left:281px"><span>M1</span></div>
<div class="thumb" style="left:418px;border-color:#e0161e"><span style="color:#e0161e">M2</span></div>
<div class="thumb" style="left:554px"><span>M3</span></div>
<div class="thumb" style="left:691px"><span>M4</span></div>
<div class="thumb" style="left:827px"></div>
<div class="thumb" style="left:964px"></div>
<div class="thumb" style="left:1100px"></div>
<div class="thumb" style="left:1237px"></div>
<div class="thumb" style="left:1374px;width:58px;border-right:none"></div>
<svg class="a" style="left:0;top:0" width="1452" height="1080">
  <path d="M154.5,910.0 C156.2,908.2 161.8,903.0 165.0,899.5 C168.2,896.0 169.8,891.3 173.7,888.9 C177.6,886.5 182.9,886.3 188.2,885.0 C193.5,883.7 200.1,881.1 205.6,881.1 C211.1,881.1 215.2,881.6 221.0,885.0 C226.8,888.4 233.2,895.9 240.3,901.4 C247.4,906.9 258.3,912.8 263.4,917.8 C268.5,922.8 271.1,926.5 271.1,931.3 C271.1,936.1 267.9,941.6 263.4,946.7 C258.9,951.8 251.8,957.3 244.1,962.1 C236.4,966.9 223.8,973.0 217.1,975.6 C210.3,978.2 208.1,977.9 203.6,977.6 C199.1,977.3 195.1,974.7 190.1,973.7 C185.1,972.7 177.9,974.0 173.7,971.8 C169.5,969.5 168.2,963.6 165.0,960.2 C161.8,956.8 156.2,953.0 154.5,951.5  C160.1,951.7 178.4,953.0 188.2,952.5 C198.0,952.0 206.9,951.5 213.3,948.6 C219.7,945.7 224.9,939.6 226.8,935.1 C228.7,930.6 228.0,925.1 224.8,921.6 C221.6,918.1 214.6,915.7 207.5,913.9 C200.4,912.1 191.2,911.6 182.4,911.0 C173.6,910.4 159.2,910.2 154.5,910.0Z" fill="#c8955a"/>
  <path d="M154.5,910 C160,906 165,901 167,897 C170,893 172,890 173.7,888.9 M154.5,951.5 C160,955 165,960 168,965 L173.7,971.8" stroke="#2424c4" stroke-width="2.8" stroke-dasharray="10 3" fill="none"/>
  <path d="M192.5,904.4 L197.5,896.4 L202.5,904.4Z" fill="#d020d0"/> <circle cx="154.5" cy="910" r="2.2" fill="#20b0b0"/> <circle cx="173.7" cy="888.9" r="2.2" fill="#20b0b0"/> <circle cx="154.5" cy="951.5" r="2.2" fill="#20b0b0"/> <circle cx="239.3" cy="900.8" r="2.2" fill="#20b0b0"/> <circle cx="271.1" cy="931.3" r="2.2" fill="#20b0b0"/>
  <path d="M291.4,907.2 C293.2,905.4 297.8,901.3 302.0,896.6 C306.2,891.9 309.6,883.2 316.4,879.2 C323.1,875.2 334.9,873.5 342.5,872.5 C350.1,871.5 356.3,872.4 361.8,873.4 C367.3,874.4 373.2,873.7 375.3,878.2 C377.4,882.7 369.8,892.8 374.3,900.4 C378.8,908.0 396.7,918.3 402.2,923.6 C407.7,928.9 407.1,928.7 407.1,932.2 C407.1,935.7 407.7,939.6 402.2,944.8 C396.7,949.9 379.1,956.5 374.3,963.1 C369.5,969.7 377.0,980.1 373.3,984.3 C369.6,988.5 358.9,988.2 352.1,988.2 C345.4,988.2 338.9,985.3 332.8,984.3 C326.7,983.3 320.0,985.4 315.5,982.4 C311.0,979.4 309.8,970.5 305.8,966.0 C301.8,961.5 293.8,957.2 291.4,955.4  C298.3,955.5 320.1,957.1 332.8,956.3 C345.5,955.5 359.5,954.6 367.5,950.6 C375.5,946.6 381.0,938.3 381.0,932.2 C381.0,926.1 375.5,918.1 367.5,913.9 C359.5,909.7 345.5,908.3 332.8,907.2 C320.1,906.1 298.3,907.2 291.4,907.2Z" fill="#c06a60"/>
  <path d="M291.4,907.2 C296,901 300,898 303,896 C308,890 313,884 316.4,879.2 M375.3,878.2 C373,885 373,895 374.3,900.4 L390,912 L402.2,923.6 C406,928 407,930 407.1,932.2 C406,937 404,941 402.2,944.8 L388,953 L374.3,963.1 C373,970 373,978 373.3,984.3 M291.4,955.4 C296,960 300,962 305.8,966 C310,972 313,978 315.5,982.4" stroke="#2424c4" stroke-width="2.8" stroke-dasharray="10 3" fill="none"/>
  <path d="M339.4,898.6 L344.4,890.6 L349.4,898.6Z" fill="#d020d0"/> <circle cx="291.4" cy="907.2" r="2.2" fill="#20b0b0"/> <circle cx="316.4" cy="879.2" r="2.2" fill="#20b0b0"/> <circle cx="342.5" cy="872.5" r="2.2" fill="#20b0b0"/> <circle cx="375.3" cy="878.2" r="2.2" fill="#20b0b0"/> <circle cx="381" cy="932.2" r="2.2" fill="#20b0b0"/> <circle cx="291.4" cy="955.4" r="2.2" fill="#20b0b0"/> <circle cx="315.5" cy="982.4" r="2.2" fill="#20b0b0"/> <circle cx="373.3" cy="984.3" r="2.2" fill="#20b0b0"/>
  <path d="M454.4,871.1 C458.4,871.8 468.2,879.8 475.6,885.0 C483.0,890.2 492.4,897.3 498.8,902.4 C505.2,907.5 510.8,911.1 514.2,915.8 C517.6,920.4 519.0,925.8 519.0,930.3 C519.0,934.8 518.5,938.1 514.2,942.8 C509.9,947.5 500.4,953.5 493.0,958.3 C485.6,963.1 476.6,966.7 469.8,971.8 C463.1,976.9 455.7,989.1 452.5,989.1 C449.3,989.1 449.3,977.3 450.6,971.8 C451.9,966.3 454.8,961.8 460.2,956.3 C465.6,950.8 479.0,942.7 483.3,939.0 C487.6,935.3 486.0,935.7 486.2,934.2 C486.4,932.8 484.3,931.8 484.3,930.3 C484.3,928.8 486.4,927.1 486.2,925.5 C486.0,923.9 486.7,923.9 483.3,920.7 C479.9,917.5 471.1,910.9 466.0,906.2 C460.9,901.5 454.9,896.9 452.5,892.7 C450.1,888.5 451.2,884.7 451.5,881.1 C451.8,877.5 450.4,870.5 454.4,871.1Z" fill="#a2ac6c"/>
  <circle cx="497.8" cy="929.3" r="3.5" fill="#c020c0"/><circle cx="500" cy="932" r="2.5" fill="#c020c0"/>
  <circle cx="497.8" cy="901.4" r="2.2" fill="#20b0b0"/> <circle cx="519" cy="930.3" r="2.2" fill="#20b0b0"/>
  <path d="M581.7,912 L617.4,907.2 L653,904.3 L656.9,913.9 L668.5,917.8 L680,935.1 L636.6,951.5 L620.3,933.2 L608.7,954.4 L562.4,946.7 L568.2,928.4 L577.8,921.6Z" fill="#4e9a89"/>
  <circle cx="618.3" cy="922.6" r="3.5" fill="#c020c0"/><circle cx="615" cy="925" r="2.5" fill="#c020c0"/><circle cx="621" cy="925" r="2.5" fill="#c020c0"/>
  <circle cx="618" cy="908.5" r="2.2" fill="#20b0b0"/>
  <path d="M710,916.8 L754.4,911 L800.7,907.7 L817.1,931.3 L769.8,948.6 L757.3,935.1 L748.6,951.5 L698.5,942.8Z" fill="#5a7298"/>
  <path d="M749.4,929.5 L754.4,921.5 L759.4,929.5Z" fill="#d020d0"/> <circle cx="755.4" cy="910" r="2.2" fill="#20b0b0"/>
</svg>

<!-- status bar -->
<div class="a" style="left:1px;top:1040px;width:1449px;height:1px;background:#b4b4b4"></div>
<div class="a" style="left:1px;top:1041px;width:1449px;height:38px;background:linear-gradient(#fafafa 0,#f2f2f2 2px,#f0f0f0);border-radius:0 0 8px 8px"></div>

<!-- dialog -->
<div class="a" style="left:639px;top:462px;width:450px;height:416px;background:#fff;border:1px solid #c8d4e0;box-shadow:1px 1px 3px rgba(0,0,0,0.35)"></div>
<div class="a" style="left:642px;top:465px;width:444px;height:37px;background:#a0bad6"></div>
<div class="a" style="left:646px;top:475px;font-size:16px;font-weight:bold;color:#1a1a1a">Tool options</div>
<div class="a" style="left:650px;top:509px;width:426px;height:25px;background:#bfcedc;border:1.5px solid #7c8188"></div>
<div class="a" style="left:666px;top:513px;font-size:15px;color:#1a1a1a">Properties</div>
<div class="eb" style="left:670px"></div><div class="eb" style="left:724px"></div><div class="eb" style="left:778px"></div><div class="eb" style="left:832px"></div><div class="eb" style="left:886px"></div><div class="eb" style="left:940px"></div><div class="eb" style="left:994px"></div>
<div class="a" style="left:839px;top:603px;width:62px;height:12px;background:#f4f4f4;border:1px solid #d8d8d8;border-radius:6px"></div>
<svg class="a" style="left:843px;top:605px" width="56" height="9"><path d="M0,1H9L4.5,7ZM13,1H22L17.5,7ZM26,1H35L30.5,7ZM39,1H48L43.5,7Z" fill="#111"/></svg>
<div class="lbl" style="top:633px">Name:</div>
<div class="lbl" style="top:670px">Color:</div>
<div class="lbl" style="top:708px">Style:</div>
<div class="lbl" style="top:747px">Width:</div>
<div class="lbl" style="top:783px">Layer:</div>
<div class="lbl" style="top:819px">Properties:</div>
<div class="fld" style="left:826px;top:625px;width:243px;height:33px"></div>
<div class="a" style="left:833px;top:630px;font-size:15.5px;color:#1a1a1a">_Bottom Line Inside</div>
<div class="fld" style="left:827px;top:663px;width:241px;height:30px;border-radius:5px"></div>
<div class="a" style="left:831px;top:668px;width:216px;height:22px;border:1.5px solid #111;background:#fff;text-align:center;font-size:12px;line-height:19px;color:#111;letter-spacing:0.3px">AUTO</div>
<div class="a" style="left:1052px;top:668px;width:1px;height:21px;background:#777"></div>
<svg class="a" style="left:1054px;top:675px" width="10" height="6"><path d="M0,0H9L4.5,5Z" fill="#222"/></svg>
<div class="a" style="left:826px;top:699px;width:243px;height:36px;background:#fff;border:1px solid #7a7a7a;border-radius:3px"></div>
<div class="a" style="left:831px;top:704px;width:207px;height:25px;border:1.5px solid #333;background:#fff"></div>
<div class="a" style="left:835px;top:713px;width:199px;height:6px;background:#000"></div>
<svg class="a" style="left:1047px;top:712px" width="16" height="10"><path d="M1,1L8,8L15,1" stroke="#777" stroke-width="1.4" fill="none"/></svg>
<div class="fld" style="left:826px;top:739px;width:243px;height:34px"></div>
<div class="a" style="left:999px;top:742px;font-size:15.5px;color:#333">0 mm</div>
<div class="a" style="left:1044px;top:741px;width:23px;height:15px;background:#f0f0f0;border:1px solid #d0d0d0"></div>
<div class="a" style="left:1044px;top:757px;width:23px;height:15px;background:#f0f0f0;border:1px solid #d0d0d0"></div>
<svg class="a" style="left:1050px;top:745px" width="12" height="24"><path d="M1,6H11L6,1Z M1,19H11L6,24Z" fill="#333"/></svg>
<div class="fld" style="left:826px;top:777px;width:243px;height:30px"></div>
<div class="a" style="left:831px;top:782px;font-size:15.5px;color:#1a1a1a">Construction</div>
<svg class="a" style="left:1047px;top:787px" width="16" height="10"><path d="M1,1L8,8L15,1" stroke="#777" stroke-width="1.4" fill="none"/></svg>
<div class="fld" style="left:826px;top:812px;width:242px;height:31px;border-radius:5px"></div>
<div class="a" style="left:831px;top:818px;font-size:15.5px;color:#1a1a1a">Properties</div>
<div class="a" style="left:1052px;top:816px;width:1px;height:22px;background:#777"></div>
<svg class="a" style="left:1054px;top:824px" width="10" height="6"><path d="M0,0H9L4.5,5Z" fill="#222"/></svg>
<!-- dock diamond -->
<svg class="a" style="left:0;top:0" width="1452" height="1080">
  <path d="M752.8,438 L781,466.5 L818,466.5 L818,510.5 L783,510.5 L752.8,540.5 L722.5,510.5 L687,510.5 L687,466.5 L724.5,466.5 Z" fill="#f0f0f0" stroke="#8a8a8a" stroke-width="1.6"/>
  <rect x="688" y="467.3" width="36" height="42.5" fill="#e3e3e3"/>
  <rect x="773.5" y="467" width="44.5" height="43.5" fill="#e3e3e3"/><path d="M778,467 H818 V510.5 H780" fill="none" stroke="#5b8ad6" stroke-width="1.3"/>
  <defs><linearGradient id="dg1" x1="0" x2="1"><stop offset="0" stop-color="#b8c8e8"/><stop offset="0.5" stop-color="#fff"/></linearGradient>
  <linearGradient id="dg2" x1="1" x2="0"><stop offset="0" stop-color="#b8c8e8"/><stop offset="0.5" stop-color="#fff"/></linearGradient></defs>
  <rect x="693.5" y="473" width="35" height="31" fill="url(#dg1)" stroke="#5c5cb0" stroke-width="1.6"/>
  <rect x="694" y="473.5" width="34" height="3" fill="#5a7ed0"/>
  <path d="M710.5,478V502" stroke="#5c5cb0" stroke-width="1.2" stroke-dasharray="1.5 1.5"/>
  <path d="M716,488L722,483V493Z" fill="#4646a8"/>
  <rect x="778.5" y="473" width="35" height="31" fill="url(#dg2)" stroke="#5c5cb0" stroke-width="1.6"/>
  <rect x="779" y="473.5" width="34" height="3" fill="#5a7ed0"/>
  <path d="M797,478V502" stroke="#9c7cc0" stroke-width="1.2" stroke-dasharray="1.5 1.5"/>
  <path d="M792,488L786,483V493Z" fill="#4646a8"/>
  <path d="M793.5,484 L793.5,500 L797,496.5 L800,503 L802.5,502 L799.5,495.5 L804.5,495.5 Z" fill="#fff" stroke="#000" stroke-width="1.1" stroke-linejoin="round"/>
</svg>
<!-- left/right dock buttons on canvas -->
<svg class="a" style="left:0;top:0" width="1452" height="1080">
  <rect x="79.5" y="600.5" width="46" height="43.5" fill="#d6d6d6" stroke="#c0c0c0"/>
  <rect x="85.5" y="606.5" width="35" height="31" fill="url(#dg1)" stroke="#5c5cb0" stroke-width="1.6"/>
  <rect x="86" y="607" width="34" height="3" fill="#5a7ed0"/>
  <path d="M102.5,612V636" stroke="#5c5cb0" stroke-width="1.2" stroke-dasharray="1.5 1.5"/>
  <path d="M108,622L114,617V627Z" fill="#4646a8"/>
</svg>
<!-- overlay -->
<div class="a" style="left:1000px;top:201px;width:450px;height:577px;background:rgba(55,100,197,0.4)"></div>
<svg class="a" style="left:0;top:0" width="1452" height="1080">
  <rect x="1380.5" y="600.5" width="46" height="43.5" fill="#d6d6d6" stroke="#c0c0c0"/>
  <rect x="1386.5" y="606.5" width="35" height="31" fill="url(#dg2)" stroke="#5c5cb0" stroke-width="1.6"/>
  <rect x="1387" y="607" width="34" height="3" fill="#5a7ed0"/>
  <path d="M1405,612V636" stroke="#5c5cb0" stroke-width="1.2" stroke-dasharray="1.5 1.5"/>
  <path d="M1400,622L1394,617V627Z" fill="#4646a8"/>
</svg>
<div class="a" style="left:0;top:2px;width:1451px;height:1078px;border:1px solid #9c9c9c;border-radius:8px;box-shadow:0 0 0 8px #e4e4e4;pointer-events:none"></div>
<div class="a" style="left:0;top:0;width:1452px;height:2px;background:#a4a4a4"></div>
<svg class="a" style="left:1432px;top:1064px" width="20" height="16"><g fill="#a8a8a8"><rect x="11" y="1" width="2" height="2"/><rect x="7" y="5" width="2" height="2"/><rect x="11" y="5" width="2" height="2"/><rect x="3" y="9" width="2" height="2"/><rect x="7" y="9" width="2" height="2"/><rect x="11" y="9" width="2" height="2"/></g></svg>
</body></html>
